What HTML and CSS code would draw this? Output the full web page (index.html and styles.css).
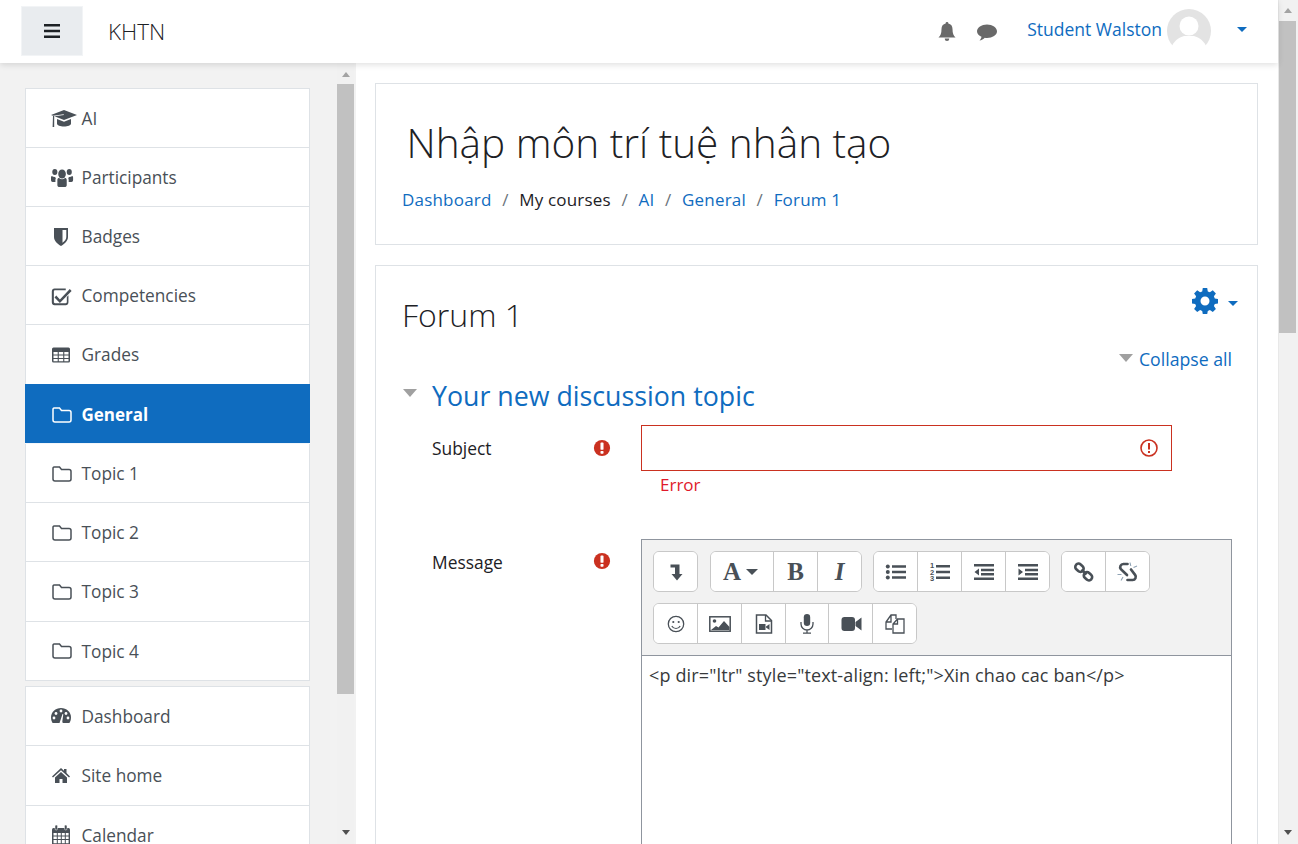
FILE: index.html
```html
<!DOCTYPE html>
<html>
  <head>
    <meta charset="utf-8" />
    <title>Forum 1</title>
    <link rel="stylesheet" href="styles.css">
  </head>
  <body>
    <svg class="sprite" width="0" height="0">
      <symbol id="i-folder" viewBox="0 0 20 18"><path d="M3 2h4.500l2 2.500H17a2 2 0 0 1 2 2V14a2 2 0 0 1-2 2H3a2 2 0 0 1-2-2V3.500A1.500 1.500 0 0 1 3 2z" fill="none" stroke="currentColor" stroke-width="1.500"/></symbol>
      <symbol id="i-error" viewBox="0 0 20 20"><circle cx="10" cy="10" r="9" fill="#ca3120"/><rect x="8.300" y="4" width="3.400" height="8" rx="1" fill="#fff"/><rect x="8.300" y="13.300" width="3.400" height="3" rx=".8" fill="#fff"/></symbol>
    </svg>

    <div class="page">
      <div class="page-col">
        <header class="navbar">
          <button class="nav-toggle">
            <svg width="18" height="14" viewBox="0 0 18 14"><path d="M1 0h16v2.600H1zM1 5.700h16v2.600H1zM1 11.400h16V14H1z" fill="#1d2125"/></svg>
          </button>
          <a class="brand">KHTN</a>
          <div class="nav-right">
            <svg class="nav-icon bell" width="18" height="20" viewBox="0 0 18 20"><path d="M9 0a1.300 1.300 0 0 1 1.300 1.500C13 2 14.500 4 14.500 7c0 4.500 1 6.500 3 8.500H.5c2-2 3-4 3-8.500 0-3 1.500-5 4.200-5.500A1.300 1.300 0 0 1 9 0zM6.800 16.500h4.400A2.200 2.200 0 0 1 9 19a2.200 2.200 0 0 1-2.200-2.500z" fill="#696969"/></svg>
            <svg class="nav-icon chat" width="20" height="17" viewBox="0 0 20 17"><path d="M10 .5c5.500 0 10 3 10 6.800s-4.500 6.700-10 6.700c-.8 0-1.500 0-2.200-.2C6.500 15.300 4.500 16.300 2.500 16.500c1-1 1.800-2.200 2-3.700C1.800 11.600 0 9.600 0 7.300 0 3.500 4.500.5 10 .5z" fill="#696969"/></svg>
            <a class="user-name">Student Walston</a>
            <svg class="avatar" width="44" height="44" viewBox="0 0 44 44"><circle cx="22" cy="22" r="22" fill="#e3e3e3"/><circle cx="22" cy="17" r="9.500" fill="#fff"/><path d="M5 37c3-7 9-9 12-10h10c3 1 9 3 12 10a22 22 0 0 1-34 0z" fill="#fff"/></svg>
            <span class="caret user-caret"></span>
          </div>
        </header>

        <div class="body-row">
          <aside class="drawer">
            <div class="drawer-list">
              <nav class="side-card">
                <a class="side-item"><svg class="side-icon" viewBox="0 0 26 20"><path d="M13 1l13 5-13 5L3.500 7.300l9.500-1.300-.5-.8L2 6.800 0 6z" fill="currentColor"/><path d="M6 10v4.500c0 1.800 3.200 3 7 3s7-1.200 7-3V10l-7 2.800zM2 7h1.200v11H1.600z" fill="currentColor"/></svg><span>AI</span></a>
                <a class="side-item"><svg class="side-icon" viewBox="0 0 26 20"><g transform="scale(.85 1)"><circle cx="13" cy="6" r="4.500" fill="currentColor"/><circle cx="4.500" cy="4" r="3" fill="currentColor"/><circle cx="21.500" cy="4" r="3" fill="currentColor"/><path d="M7.500 12c0-1.500 1-2 2-2 1 .8 2.200 1.200 3.500 1.200s2.500-.4 3.500-1.200c1 0 2 .5 2 2v5c0 1.500-1 2-2.500 2H10c-1.500 0-2.500-.5-2.500-2zM1 8c1 .6 2.200 1 3.500 1l1.300 1c-.4.500-.6 1.200-.6 2v2H2c-1.200 0-2-.7-2-2V9.500c0-.7.300-1.200 1-1.500zM25 8c-1 .6-2.200 1-3.500 1l-1.300 1c.4.500.6 1.200.6 2v2H24c1.200 0 2-.7 2-2V9.500c0-.7-.3-1.200-1-1.500z" fill="currentColor"/></g></svg><span>Participants</span></a>
                <a class="side-item"><svg class="side-icon" viewBox="0 0 26 20"><path transform="translate(-3 0)" d="M6 1h14v9c0 4-3.500 7-7 9-3.500-2-7-5-7-9zM14.500 3v12.800c2-1.500 3.800-3.500 3.800-5.800V3z" fill="currentColor" fill-rule="evenodd"/></svg><span>Badges</span></a>
                <a class="side-item"><svg class="side-icon" viewBox="0 0 26 20"><g transform="translate(-1 0) scale(.9 1)"><path d="M5 2.500h12.500v1.800H5.500a1.200 1.200 0 0 0-1.200 1.200v10.500c0 .7.500 1.200 1.200 1.200h12c.7 0 1.200-.5 1.200-1.200V11l1.800-1.800v7c0 1.700-1.300 3-3 3H5c-1.700 0-3-1.300-3-3V5.500c0-1.700 1.300-3 3-3z" fill="currentColor"/><path d="M7 9.500l4 4L22 3l2 2-13 12-6-5.500z" fill="currentColor"/></g></svg><span>Competencies</span></a>
                <a class="side-item"><svg class="side-icon" viewBox="0 0 26 20"><g transform="translate(-2 0)"><rect x="3" y="2.500" width="18" height="15" rx="1.500" fill="currentColor"/><path d="M4.500 7h4.200v2.500H4.500zM9.800 7h4.400v2.500H9.800zM15.300 7h4.200v2.500h-4.200zM4.500 10.500h4.200V13H4.500zM9.800 10.500h4.400V13H9.800zM15.300 10.500h4.200V13h-4.200zM4.500 14h4.200v2.200H4.500zM9.800 14h4.400v2.200H9.800zM15.300 14h4.200v2.200h-4.200z" fill="#fff"/></g></svg><span>Grades</span></a>
                <a class="side-item is-active"><svg class="side-icon folder"><use href="#i-folder"/></svg><span>General</span></a>
                <a class="side-item"><svg class="side-icon folder"><use href="#i-folder"/></svg><span>Topic 1</span></a>
                <a class="side-item"><svg class="side-icon folder"><use href="#i-folder"/></svg><span>Topic 2</span></a>
                <a class="side-item"><svg class="side-icon folder"><use href="#i-folder"/></svg><span>Topic 3</span></a>
                <a class="side-item"><svg class="side-icon folder"><use href="#i-folder"/></svg><span>Topic 4</span></a>
              </nav>
              <nav class="side-card second">
                <a class="side-item"><svg class="side-icon" viewBox="0 0 26 20"><g transform="translate(-1 0)"><path d="M11 2c5.500 0 10 4 10 9.500 0 2-.6 4-1.600 5.500H2.600C1.600 15.500 1 13.500 1 11.500 1 6 5.500 2 11 2z" fill="currentColor"/><circle cx="6" cy="7.500" r="1.400" fill="#fff"/><circle cx="11" cy="5" r="1.400" fill="#fff"/><circle cx="16" cy="7.500" r="1.400" fill="#fff"/><circle cx="4" cy="12" r="1.400" fill="#fff"/><circle cx="18" cy="12" r="1.400" fill="#fff"/><path d="M10 15.500L12.500 8l.8.3-1 7.200a1.500 1.500 0 1 1-2.300 0z" fill="#fff"/></g></svg><span>Dashboard</span></a>
                <a class="side-item"><svg class="side-icon" viewBox="0 0 26 20"><path d="M10 2l3 2.800V3h2.500v4L19 10.500l-1 1-8-7.300-8 7.300-1-1z" fill="currentColor"/><path d="M4 11.500L10 6l6 5.500V17h-4.500v-4h-3v4H4z" fill="currentColor"/></svg><span>Site home</span></a>
                <a class="side-item"><svg class="side-icon" viewBox="0 0 26 20"><g transform="translate(-2 0)"><rect x="3" y="3" width="18" height="17" rx="1.500" fill="currentColor"/><path d="M4.500 8h3.300v2.500H4.500zM8.800 8h3v2.500h-3zM12.800 8h3v2.500h-3zM16.800 8h2.800v2.500h-2.800zM4.500 11.500h3.300V14H4.500zM8.800 11.500h3V14h-3zM12.800 11.500h3V14h-3zM16.800 11.500h2.800V14h-2.800zM4.500 15h3.300v3.300H4.500zM8.800 15h3v3.300h-3zM12.800 15h3v3.300h-3zM16.800 15h2.800v3.300h-2.800z" fill="#fff"/><rect x="6" y="0" width="2.500" height="5" rx="1.200" fill="currentColor" stroke="#fff" stroke-width=".5"/><rect x="15.500" y="0" width="2.500" height="5" rx="1.200" fill="currentColor" stroke="#fff" stroke-width=".5"/></g></svg><span>Calendar</span></a>
              </nav>
            </div>
            <div class="scrollbar drawer-scroll">
              <span class="arrow up"></span>
              <span class="thumb"></span>
              <span class="arrow down"></span>
            </div>
          </aside>

          <main class="main">
            <section class="card head-card">
              <h1 class="course-title">Nhập môn trí tuệ nhân tạo</h1>
              <ol class="breadcrumb">
                <li><a>Dashboard</a></li>
                <li>My courses</li>
                <li><a>AI</a></li>
                <li><a>General</a></li>
                <li><a>Forum 1</a></li>
              </ol>
            </section>

            <section class="card forum-card">
              <div class="forum-top">
                <h2 class="forum-title">Forum 1</h2>
                <div class="gear-menu">
                  <svg width="26" height="26" viewBox="0 0 26 26"><path fill="#0f6cbf" fill-rule="evenodd" d="M10.800 0h4.400l.6 3.400 2.100.9 2.900-2 3.100 3.100-2 2.900.9 2.100 3.200.6v4.400l-3.200.6-.9 2.100 2 2.900-3.100 3.100-2.900-2-2.100.9-.6 3.100h-4.400l-.6-3.100-2.100-.9-2.900 2-3.100-3.100 2-2.900-.9-2.100-3.200-.6v-4.400l3.200-.6.900-2.100-2-2.900 3.100-3.100 2.900 2 2.100-.9zM13 8.500a4.500 4.500 0 1 0 0 9 4.500 4.500 0 0 0 0-9z"/></svg>
                  <span class="caret"></span>
                </div>
              </div>
              <div class="collapse-row">
                <span class="tri"></span><a>Collapse all</a>
              </div>
              <h3 class="section-head"><span class="tri"></span><a>Your new discussion topic</a></h3>

              <div class="form-row subject-row">
                <label class="form-label">Subject</label>
                <svg class="req-icon"><use href="#i-error"/></svg>
                <div class="form-field">
                  <div class="text-input">
                    <svg width="18" height="18" viewBox="0 0 18 18"><circle cx="9" cy="9" r="8" fill="none" stroke="#ca3120" stroke-width="1.600"/><rect x="8" y="4" width="2" height="6.500" fill="#ca3120"/><rect x="8" y="12" width="2" height="2" fill="#ca3120"/></svg>
                  </div>
                  <div class="error-text">Error</div>
                </div>
              </div>

              <div class="form-row message-row">
                <label class="form-label">Message</label>
                <svg class="req-icon"><use href="#i-error"/></svg>
                <div class="editor">
                  <div class="toolbar">
                    <div class="tool-row">
                      <div class="tool-group first-group">
                        <button class="tool w43"><svg width="20" height="20" viewBox="0 0 20 20"><path d="M4.500 2.500H13.500V12H16.500L11 18.500 5.500 12H9V5.500H4.500z" fill="#495057"/></svg></button>
                      </div>
                      <div class="tool-group">
                        <button class="tool w63 font-tool"><span class="serif-a">A</span><span class="tool-caret"></span></button>
                        <button class="tool w44"><span class="serif-b">B</span></button>
                        <button class="tool w43"><span class="serif-i">I</span></button>
                      </div>
                      <div class="tool-group">
                        <button class="tool w44"><svg width="22" height="18" viewBox="0 0 22 18"><circle cx="2.800" cy="3.500" r="2" fill="#495057"/><circle cx="2.800" cy="9" r="2" fill="#495057"/><circle cx="2.800" cy="14.500" r="2" fill="#495057"/><path d="M7 2.200h14v2.600H7zM7 7.700h14v2.600H7zM7 13.200h14v2.600H7z" fill="#495057"/></svg></button>
                        <button class="tool w44"><svg width="22" height="22" viewBox="0 0 22 22"><path d="M7 4h14v2.400H7zM7 9.800h14v2.400H7zM7 15.600h14V18H7z" fill="#495057"/><text x="1" y="7" class="mini-num">1</text><text x="1" y="13.500" class="mini-num">2</text><text x="1" y="20" class="mini-num">3</text></svg></button>
                        <button class="tool w44"><svg width="22" height="18" viewBox="0 0 22 18"><path d="M1 1h20v2.500H1zM8 5.800h13v2.500H8zM8 10h13v2.500H8zM1 14.500h20V17H1zM6 5.500v7L1.500 9z" fill="#495057"/></svg></button>
                        <button class="tool w43"><svg width="22" height="18" viewBox="0 0 22 18"><path d="M1 1h20v2.500H1zM8 5.800h13v2.500H8zM8 10h13v2.500H8zM1 14.500h20V17H1zM1.500 5.500v7L6 9z" fill="#495057"/></svg></button>
                      </div>
                      <div class="tool-group">
                        <button class="tool w44"><svg width="22" height="22" viewBox="0 0 22 22"><g fill="none" stroke="#495057" stroke-width="2.600"><rect x="2" y="3.500" width="9" height="6.500" rx="3.200" transform="rotate(42 6.500 6.700)"/><rect x="10.500" y="12" width="9" height="6.500" rx="3.200" transform="rotate(42 15 15.200)"/><path d="M8.500 8.500l5 5"/></g></svg></button>
                        <button class="tool w43"><svg width="22" height="22" viewBox="0 0 22 22"><g fill="none" stroke="#495057" stroke-width="2.700" stroke-linecap="round"><path d="M10.500 3H6.500a3.200 3.200 0 0 0-2.600 5.200L10 14"/><path d="M10.500 19h5a3.200 3.200 0 0 0 2.600-5.200L14 8.500"/></g><g stroke="#8fa3b5" stroke-width="1.100"><path d="M13 1.500l.8 3.500M20 5l-3.500 1.500M.5 13.500h4M4 19.500L6 16"/></g></svg></button>
                      </div>
                    </div>
                    <div class="tool-row">
                      <div class="tool-group">
                        <button class="tool w44"><svg width="18" height="18" viewBox="0 0 18 18"><circle cx="9" cy="9" r="7.700" fill="none" stroke="#495057" stroke-width="1.300"/><circle cx="6.300" cy="7" r="1.100" fill="#495057"/><circle cx="11.700" cy="7" r="1.100" fill="#495057"/><path d="M4.800 11c1 1.800 2.500 2.500 4.200 2.500s3.200-.7 4.200-2.500" fill="none" stroke="#495057" stroke-width="1.200"/></svg></button>
                        <button class="tool w44"><svg width="22" height="18" viewBox="0 0 22 18"><rect x=".8" y="1.800" width="20.400" height="14.400" fill="none" stroke="#495057" stroke-width="1.500"/><circle cx="5.500" cy="6" r="1.800" fill="#495057"/><path d="M2 15l5-4 2.500 1.500L15 6l5.500 6v3z" fill="#495057"/></svg></button>
                        <button class="tool w44"><svg width="18" height="20" viewBox="0 0 18 20"><path d="M1.500 1h9.500l5.500 5.500V19h-15z" fill="none" stroke="#495057" stroke-width="1.500"/><path d="M10.500 1v6h6" fill="none" stroke="#495057" stroke-width="1.300"/><rect x="4" y="10" width="6.500" height="6" fill="#495057"/><path d="M11 12.500l3.500-2.500v6L11 13.500z" fill="#495057"/></svg></button>
                        <button class="tool w43"><svg width="14" height="20" viewBox="0 0 14 20"><rect x="3.800" y="0" width="6.400" height="12" rx="3.200" fill="#495057"/><path d="M1 8v2a6 6 0 0 0 12 0V8M7 16v2.500M3 19.200h8" fill="none" stroke="#495057" stroke-width="1.300"/></svg></button>
                        <button class="tool w44"><svg width="22" height="16" viewBox="0 0 22 16"><rect x="1.500" y="1" width="13.500" height="14" rx="3" fill="#495057"/><path d="M15.500 6L21.500 1.500v13L15.500 10z" fill="#495057"/></svg></button>
                        <button class="tool w43"><svg width="20" height="20" viewBox="0 0 20 20"><g fill="none" stroke="#495057" stroke-width="1.300"><path d="M7 15H1V8L6 1h5v4M1 8h5V1"/><path d="M8 19V10l4.500-5H19v14zM8 10h4.500V5"/></g></svg></button>
                      </div>
                    </div>
                  </div>
                  <div class="editor-text">&lt;p dir="ltr" style="text-align: left;"&gt;Xin chao cac ban&lt;/p&gt;</div>
                </div>
              </div>
            </section>
          </main>
        </div>
      </div>
      <div class="scrollbar page-scroll">
        <span class="arrow up"></span>
        <span class="thumb"></span>
        <span class="arrow down"></span>
      </div>
    </div>
  </body>
</html>
```

FILE: styles.css
```css
* {
  box-sizing: border-box;
}
html, body {
  margin: 0;
  height: 100%;
  overflow: hidden;
}
body {
  font-family: "Open Sans", "Noto Sans", sans-serif;
  font-size: 17px;
  color: #1d2125;
  background: #fff;
}
a {
  color: #0f6cbf;
  text-decoration: none;
}
.sprite {
  display: none;
}
.page {
  display: flex;
  height: 844px;
}
.page-col {
  flex: 1;
  min-width: 0;
  display: flex;
  flex-direction: column;
}

/* top bar */
.navbar {
  height: 63px;
  flex: none;
  display: flex;
  align-items: center;
  padding-left: 21px;
  background: #fff;
  box-shadow: 0 2px 6px rgba(0, 0, 0, 0.12);
  position: relative;
  z-index: 2;
}
.nav-toggle {
  width: 62px;
  height: 50px;
  margin-top: -1px;
  border: 1px solid #f2f4f6;
  background: #e9ecef;
  display: flex;
  align-items: center;
  justify-content: center;
  padding: 0;
}
.brand {
  margin-left: 25px;
  font-size: 22.5px;
  font-weight: 300;
  color: #1d2125;
}
.nav-right {
  margin-left: auto;
  display: flex;
  align-items: center;
  padding-right: 31px;
}
.nav-icon.bell {
  margin-right: 21px;
  margin-top: 1px;
}
.nav-icon.chat {
  margin-right: 30px;
  margin-top: 2px;
}
.user-name {
  font-size: 17.5px;
  margin-top: -5px;
}
.avatar {
  margin-left: 5px;
  margin-top: -1px;
}
.caret {
  display: inline-block;
  width: 0;
  height: 0;
  border-left: 5.5px solid transparent;
  border-right: 5.5px solid transparent;
  border-top: 5px solid #0f6cbf;
}
.user-caret {
  margin-left: 26px;
  margin-top: -5px;
}

.body-row {
  flex: 1;
  min-height: 0;
  display: flex;
}

/* left drawer */
.drawer {
  width: 356px;
  flex: none;
  display: flex;
  background: #f2f2f2;
  overflow: hidden;
}
.drawer-list {
  width: 337px;
  flex: none;
  padding: 25px 27px 0 25px;
}
.side-card {
  background: #fff;
  border: 1px solid #dee2e6;
  border-bottom: 0;
}
.side-card.second {
  margin-top: 5px;
}
.side-item {
  height: 59.15px;
  display: flex;
  align-items: center;
  padding: 1px 0 0 25px;
  font-size: 17.25px;
  color: #495057;
  border-bottom: 1px solid #dee2e6;
}
.side-item:first-child {
  height: 59px;
}
.second .side-item {
  height: 59.5px;
}
.side-icon {
  width: 26px;
  height: 20px;
  margin-right: 4.5px;
  flex: none;
}
.side-icon.folder {
  width: 20px;
  height: 18px;
  margin-left: 1px;
  margin-right: 9.5px;
}
.side-item.is-active {
  margin: -1px -1px 0;
  padding: 3px 0 0 26px;
  height: 60.55px;
  background: #0f6cbf;
  color: #fff;
  font-weight: 700;
  font-size: 17px;
  border-bottom-color: #f2f6fa;
}

/* fake scrollbars */
.scrollbar {
  display: flex;
  flex-direction: column;
  align-items: center;
  flex: none;
  background: #f1f1f1;
}
.drawer-scroll {
  width: 17px;
  height: 100%;
}
.page-scroll {
  width: 20px;
  padding-right: 2px;
  border-left: 1px solid #e8e8e8;
}
.thumb {
  display: block;
  width: 17px;
  background: #c1c1c1;
}
.drawer-scroll .thumb {
  height: 610px;
  margin-top: 7px;
}
.page-scroll .thumb {
  height: 312px;
  margin-top: 8px;
}
.arrow {
  display: block;
  width: 0;
  height: 0;
  border-left: 4.500px solid transparent;
  border-right: 4.500px solid transparent;
}
.arrow.up {
  margin-top: 8px;
  border-bottom: 5px solid #a3a3a3;
}
.drawer-scroll .arrow.up {
  margin-top: 9px;
}
.arrow.down {
  margin-top: auto;
  margin-bottom: 9px;
  border-top: 5px solid #505050;
}

/* main content */
.main {
  flex: 1;
  min-width: 0;
  padding: 20px 20px 0 19px;
  overflow: hidden;
}
.card {
  background: #fff;
  border: 1px solid #dee2e6;
}
.head-card {
  height: 162px;
  padding: 29px 26px 0 26px;
  margin-bottom: 20px;
}
.course-title {
  margin: 0 0 0 4.5px;
  font-size: 40.5px;
  font-weight: 300;
  line-height: 60px;
  color: #1d2125;
}
.breadcrumb {
  list-style: none;
  margin: 15px 0 0;
  padding: 0;
  display: flex;
  letter-spacing: 0.2px;
}
.breadcrumb li + li::before {
  content: "/";
  padding: 0 10.6px;
  color: #6a737b;
}
.forum-card {
  height: 620px;
  padding: 0 25px 0 26px;
}
.forum-top {
  display: flex;
  justify-content: space-between;
  padding-top: 22px;
  height: 80px;
}
.forum-title {
  margin: 6px 0 0;
  font-size: 32px;
  font-weight: 300;
  line-height: 42px;
}
.gear-menu {
  display: flex;
  align-items: center;
  height: 26px;
  margin-right: -6px;
}
.gear-menu .caret {
  margin-left: 10px;
  margin-top: 5px;
}
.tri {
  display: inline-block;
  width: 0;
  height: 0;
  border-left: 7.500px solid transparent;
  border-right: 7.500px solid transparent;
  border-top: 8px solid #a0a0a0;
}
.collapse-row {
  display: flex;
  justify-content: flex-end;
  align-items: center;
  gap: 6px;
  height: 26px;
  font-size: 17.7px;
}
.collapse-row .tri {
  margin-top: -3px;
}
.section-head {
  margin: 3px 0 0;
  display: flex;
  align-items: center;
  font-size: 26.75px;
  font-weight: 400;
  height: 40px;
}
.section-head .tri {
  margin-left: 1px;
  margin-right: 15px;
  margin-top: -4px;
}
.form-row {
  display: grid;
  grid-template-columns: 152px 57px 1fr;
  margin-left: 30px;
}
.subject-row {
  margin-top: 10px;
  height: 114px;
}
.form-label {
  margin-top: 10px;
  line-height: 26px;
  font-size: 17.4px;
}
.req-icon {
  width: 18px;
  height: 18px;
  margin: 14px 0 0 9px;
}
.text-input {
  width: 531px;
  height: 46px;
  border: 1px solid #ca3120;
  display: flex;
  align-items: center;
  justify-content: flex-end;
  padding-right: 13px;
}
.error-text {
  margin: 1px 0 0 19px;
  color: #e0192b;
  line-height: 26px;
}
.message-row .form-label {
  margin-top: 10px;
}
.message-row .req-icon {
  margin-top: 13px;
}
.editor {
  border: 1px solid #8f959e;
  height: 400px;
  font-size: 18px;
}
.toolbar {
  background: #f2f2f2;
  border-bottom: 1px solid #8f959e;
  height: 116px;
  padding: 11px 11px 0;
  display: flex;
  flex-direction: column;
  gap: 11px;
}
.tool-row {
  display: flex;
  gap: 11px;
}
.tool-group {
  display: flex;
  height: 41px;
  background: #fff;
  border: 1px solid #c8c8c8;
  border-radius: 6px;
  overflow: hidden;
}
.first-group {
  margin-right: 1px;
}
.tool {
  border: 0;
  border-right: 1px solid #c8c8c8;
  background: #fff;
  padding: 0;
  display: flex;
  align-items: center;
  justify-content: center;
  height: 39px;
}
.tool:last-child {
  border-right: 0;
}
.font-tool {
  padding-right: 3px;
}
.w43 { width: 43px; }
.w44 { width: 44px; }
.w63 { width: 63px; }
.serif-a, .serif-b, .serif-i {
  font-family: "Liberation Serif", serif;
  font-size: 25px;
  font-weight: 700;
  color: #495057;
}
.serif-i {
  font-style: italic;
}
.tool-caret {
  margin-left: 5px;
  width: 0;
  height: 0;
  border-left: 6px solid transparent;
  border-right: 6px solid transparent;
  border-top: 6px solid #495057;
}
.mini-num {
  font-family: "Liberation Sans", sans-serif;
  font-size: 7.5px;
  font-weight: 700;
  fill: #495057;
}
.editor-text {
  padding: 6px 7px;
  line-height: 26px;
  color: #373a3c;
  white-space: nowrap;
  letter-spacing: 0.14px;
}
```
